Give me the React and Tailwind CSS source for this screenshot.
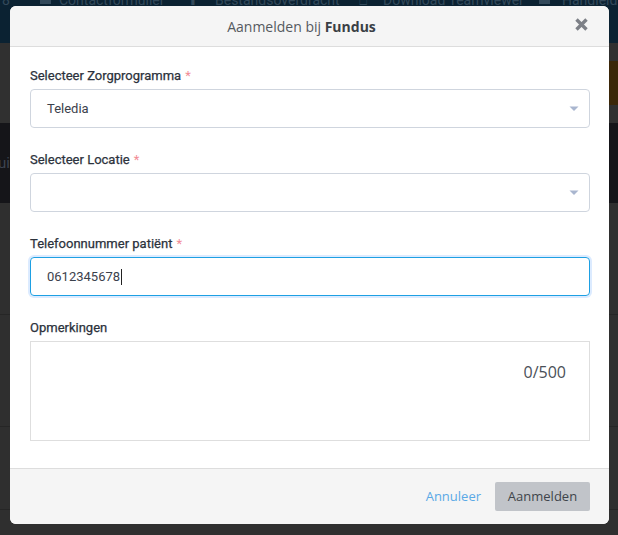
import React from "react";

function Label({ children, required }) {
  return (
    <div className="text-[13px] leading-4 font-normal text-[#2c323c] mb-[5px] [-webkit-text-stroke:0.25px_#2c323c]" style={{ fontFamily: "Roboto, sans-serif" }}>
      {children}
      {required && <span className="text-[#f28b95] ml-1 [-webkit-text-stroke:0px_transparent]">*</span>}
    </div>
  );
}

function Caret() {
  return (
    <svg width="10" height="6" viewBox="0 0 10 6" className="shrink-0">
      <path d="M0.5 0.5 L9.5 0.5 L5 5 Z" fill="#a9b6cf" />
    </svg>
  );
}

export default function App() {
  return (
    <div className="relative w-[618px] h-[535px] overflow-hidden bg-[#2f2f2f]" style={{ fontFamily: "Roboto, sans-serif" }}>
      {/* dimmed background page */}
      <div className="flex flex-col">
        <div className="h-[43px] bg-[#0b2232] overflow-hidden">
          <div className="flex items-start whitespace-nowrap text-[14px] text-[#33495a] leading-none -mt-[7px] pl-[2px]">
            <span className="w-[38px] shrink-0">8</span>
            <span className="w-[11px] h-[11px] shrink-0 bg-[#33495a] mr-[8px]" />
            <span className="w-[128px] shrink-0">Contactformulier</span>
            <span className="w-[28px] shrink-0">⬆</span>
            <span className="w-[144px] shrink-0">Bestandsoverdracht</span>
            <span className="w-[24px] shrink-0">⎕</span>
            <span className="w-[156px] shrink-0">Download Teamviewer</span>
            <span className="w-[11px] h-[11px] shrink-0 bg-[#33495a] mr-[12px]" />
            <span className="shrink-0">Handleiding</span>
          </div>
        </div>
        <div className="h-[80px] bg-[#303030] flex justify-end items-center">
          <div className="w-[20px] h-[44px] bg-[#3b2709]" />
        </div>
        <div className="h-[80px] bg-[#151519] flex items-center text-[15px] text-[#3e4450]">
          <span className="-ml-[2px]">ui</span>
        </div>
        <div className="h-[112px] border-b border-[#262626]" />
        <div className="h-[112px] border-b border-[#262626]" />
        <div className="h-[83px] border-b border-[#262626]" />
      </div>

      {/* modal */}
      <div className="absolute left-[10px] top-[6px] w-[599px] h-[518px] bg-white rounded-[6px] overflow-hidden flex flex-col">
        <div className="h-[41px] bg-[#f5f5f5] border-b border-[#dddddd] flex items-center justify-center relative pr-[16px]" style={{ fontFamily: "'Open Sans', sans-serif" }}>
          <span className="text-[14px] text-[#555a60]">
            Aanmelden bij <span className="font-bold text-[#3a3f45]">Fundus</span>
          </span>
          <span className="absolute right-[20px] top-[11px]">
            <svg width="15" height="15" viewBox="0 0 15 15">
              <path d="M2.5 2.5 L12.5 12.5 M12.5 2.5 L2.5 12.5" stroke="#7d8087" strokeWidth="3.4" strokeLinecap="butt" />
            </svg>
          </span>
        </div>

        <div className="flex-1 pl-[20px] pr-[19px] pt-[21px] flex flex-col">
          <Label required>Selecteer Zorgprogramma</Label>
          <div className="h-[39px] border border-[#cfd5de] rounded-[4px] flex items-center justify-between pl-[16px] pr-[10px] text-[13px] text-[#3b414c]">
            <span>Teledia</span>
            <Caret />
          </div>

          <div className="mt-[24px]">
            <Label required>Selecteer Locatie</Label>
          </div>
          <div className="h-[39px] border border-[#cfd5de] rounded-[4px] flex items-center justify-end pl-[16px] pr-[10px]">
            <Caret />
          </div>

          <div className="mt-[24px]">
            <Label required>Telefoonnummer patiënt</Label>
          </div>
          <div className="h-[39px] border border-[#1ea0e3] rounded-[4px] shadow-[0_0_0_2px_#dcebff] flex items-center pl-[16px] text-[13px] text-[#3b414c]">
            <span>0612345678</span>
            <span className="inline-block w-px h-[16px] bg-[#222] ml-[1px]" />
          </div>

          <div className="mt-[24px]">
            <Label>Opmerkingen</Label>
          </div>
          <div className="h-[100px] border border-[#dedede] flex justify-end pt-[20px] pr-[23px]">
            <span className="text-[16px] text-[#4a5058] leading-5" style={{ fontFamily: "'Open Sans', sans-serif" }}>0/500</span>
          </div>
        </div>

        <div className="h-[56px] bg-[#f5f5f5] border-t border-[#dddddd] flex items-center justify-end gap-[14px] pr-[19px]" style={{ fontFamily: "'Open Sans', sans-serif" }}>
          <span className="text-[13px] text-[#5aa9e6]">Annuleer</span>
          <div className="w-[95px] h-[29px] bg-[#c1c4c9] rounded-[2px] flex items-center justify-center text-[13px] text-[#3f444b]">
            Aanmelden
          </div>
        </div>
      </div>
    </div>
  );
}
